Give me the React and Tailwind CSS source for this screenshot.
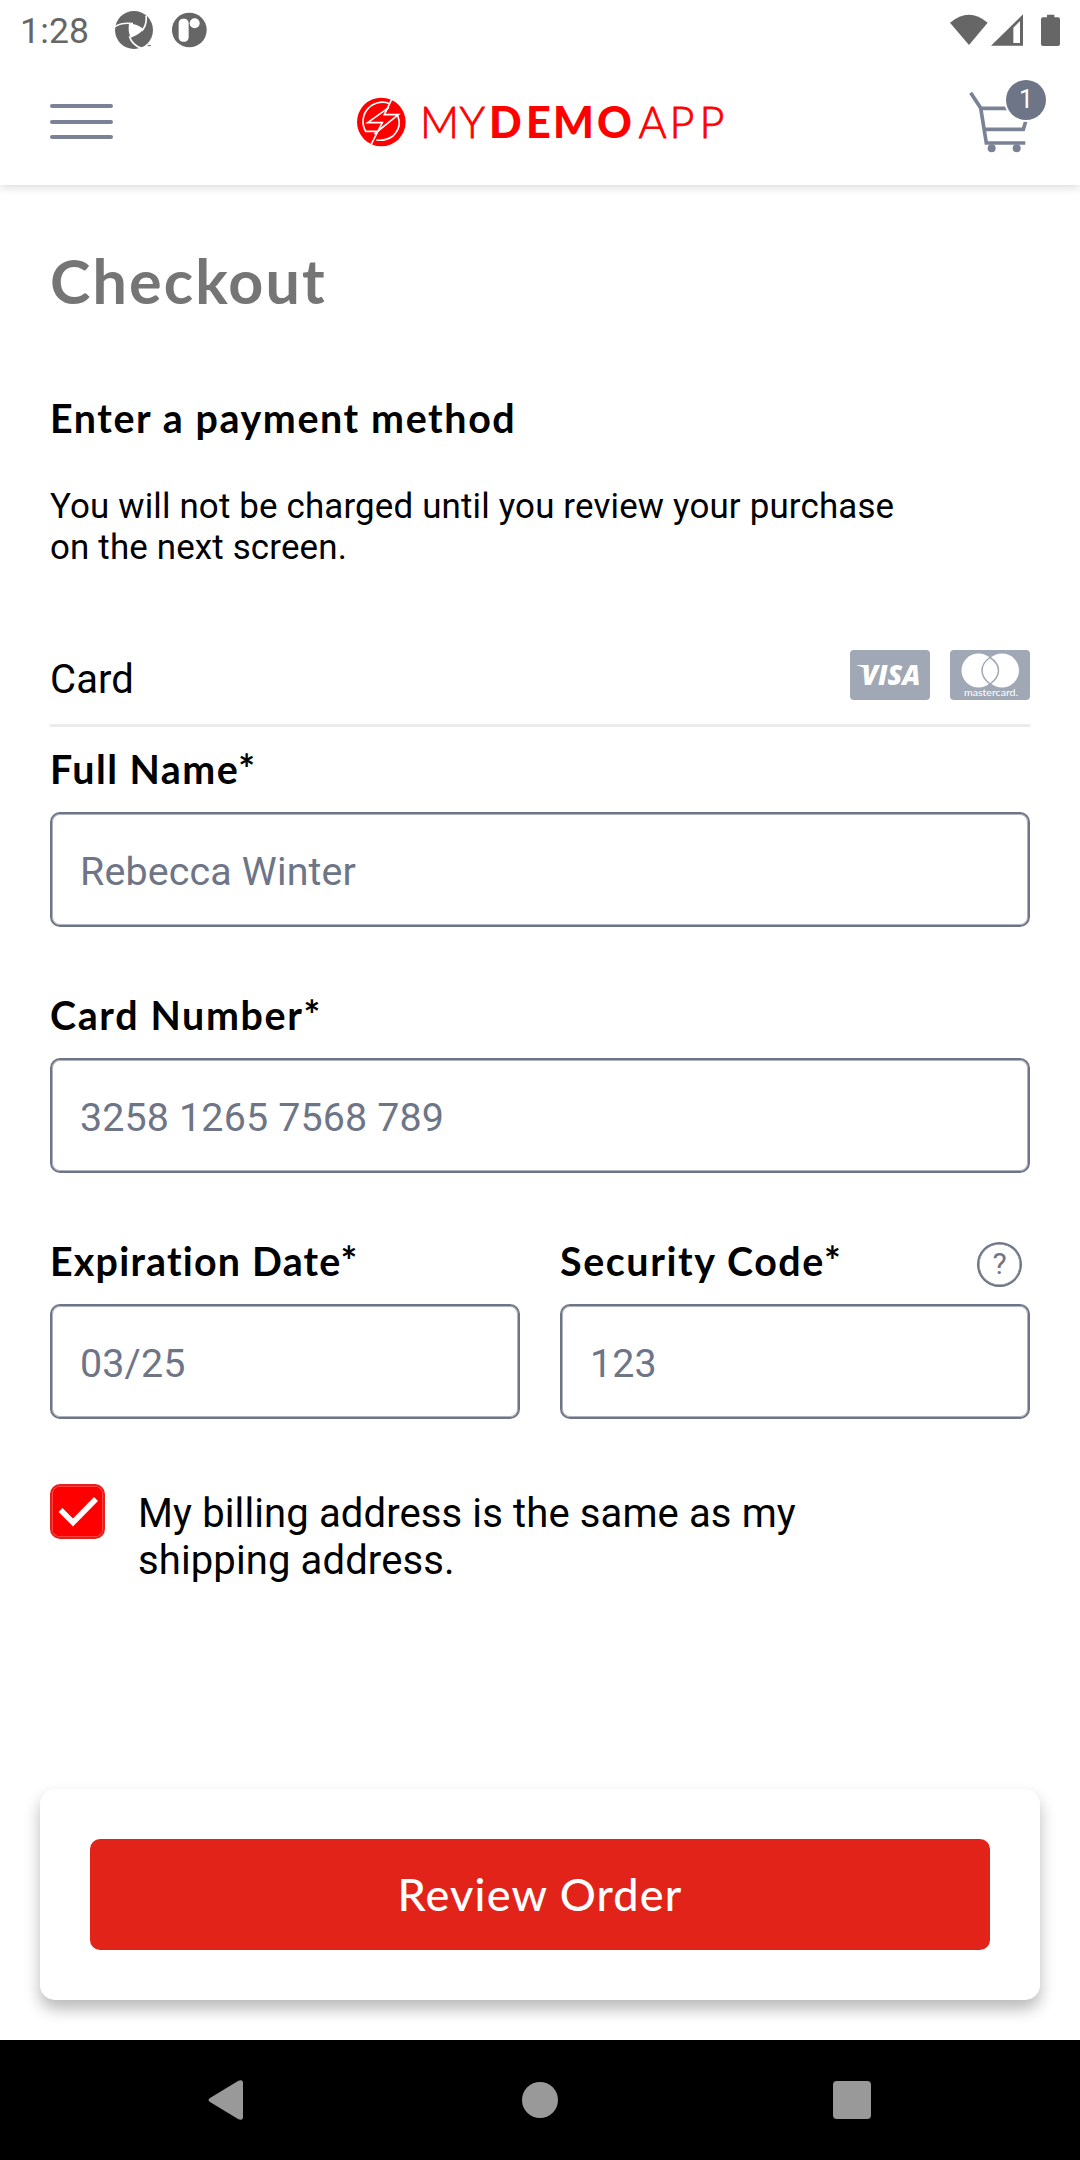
import React from "react";

const ROBOTO = "font-['Roboto','Liberation_Sans',sans-serif]";
const LATO = "font-['Lato','Open_Sans',sans-serif]";

function StatusBar() {
  return (
    <div className={`${ROBOTO} flex h-[63px] shrink-0 items-center justify-between pr-5 pl-[20px] text-[#666]`}>
      <div className="flex items-center">
        <span className="w-[95px] text-[35.500px] leading-[63px] tracking-[0.2px]">1:28</span>
        <svg className="mb-[3px] h-[38px] w-[38px]" viewBox="0 0 114 114">
          <circle cx="57" cy="57" r="57" fill="#666" />
          <path d="M42 38Q66 38 86 54Q72 72 47 80Q38 60 42 38Z" fill="#fff" />
          <path d="M0 47Q22 33 54 38M93 14Q97 40 80 60M43 76Q52 104 82 113" fill="none" stroke="#fff" strokeWidth="5" />
          <path d="M98 104h10" stroke="#666" strokeWidth="3" />
        </svg>
        <svg className="mb-[3px] ml-[18px] h-[36px] w-[36px]" viewBox="0 0 108 108">
          <circle cx="55" cy="54" r="52" fill="#666" />
          <rect x="23" y="20" width="30" height="69" rx="13" fill="#fff" />
          <circle cx="71" cy="34" r="15" fill="#fff" />
        </svg>
      </div>
      <svg className="mb-1 h-[34px] w-[110px]" viewBox="0 0 330 102">
        <path d="M0 29Q57 -19 113 29L57 96Z" fill="#666" />
        <path d="M123 98L219 4V98ZM190 44V90H210V24Z" fill="#666" fillRule="evenodd" />
        <path d="M291 5h22v8h11q6 0 6 6v74q0 6-6 6h-45q-6 0-6-6V19q0-6 6-6h12z" fill="#666" />
      </svg>
    </div>
  );
}

function Logo() {
  return (
    <svg className="h-[60px] w-[380px]" viewBox="0 0 380 60" role="img" aria-label="MyDemoApp">
      <g transform="scale(0.33333)">
        <circle cx="91" cy="90" r="73" fill="#f00" />
        <g fill="none" stroke="#fff" strokeWidth="5">
          <path d="M126 14L100 68H142L70 126" />
          <path d="M114 46L50 92H94L56 166" />
          <path d="M116 35A58 58 0 0 0 44 118H80" />
          <path d="M138 68Q156 102 126 132Q104 148 76 144" />
        </g>
      </g>
      <g fill="#f00" className={LATO} fontSize="43">
        <text fontWeight="300" stroke="#f00" strokeWidth="0.8" x="69 108.500" y="46">MY</text>
        <text fontWeight="900" x="138 175 202 246" y="46">DEMO</text>
        <text fontWeight="300" stroke="#f00" strokeWidth="0.8" x="287.500 318.500 348.500" y="46">APP</text>
      </g>
    </svg>
  );
}

function Header() {
  return (
    <header className="flex h-[122px] shrink-0 items-center justify-between pr-[34px] pb-[5px] pl-[50px] shadow-[0_2px_9px_rgba(0,0,0,0.16)] [clip-path:inset(0_0_-16px_0)]">
      <div className="flex w-[63px] flex-col gap-[11.500px]">
        <span className="h-1 rounded-full bg-[#7a8395]" />
        <span className="h-1 rounded-full bg-[#7a8395]" />
        <span className="h-1 rounded-full bg-[#7a8395]" />
      </div>
      <Logo />
      <div className="relative mb-[3px] h-[80px] w-[78px]">
        <svg className="h-full w-full" viewBox="0 0 234 240">
          <g fill="none" stroke="#7a8395" strokeWidth="11">
            <path d="M8 38L38 84L55 189H172" />
            <path d="M38 85H120M48 148H166L175 118" />
          </g>
          <circle cx="71" cy="205" r="12" fill="#7a8395" />
          <circle cx="146" cy="205" r="12" fill="#7a8395" />
          <circle cx="175" cy="59" r="67" fill="#fff" />
        </svg>
        <span className={`${ROBOTO} absolute top-0 right-0 flex h-10 w-10 items-center justify-center rounded-full bg-[#6e7587] text-[25px] text-white`}>1</span>
      </div>
    </header>
  );
}

function CardBrands() {
  return (
    <div className="flex gap-5">
      <svg className="h-[50px] w-[80px]" viewBox="0 0 80 50">
        <rect width="80" height="50" rx="4" fill="#a0a7b5" />
        <text x="11.500" y="35" textLength="59" lengthAdjust="spacingAndGlyphs" fill="#fff" fontSize="28" fontWeight="800" fontStyle="italic" className="font-['Open_Sans',sans-serif]">VISA</text>
        <path d="M6 15H15Q18 16 18.500 21Q14 17 6 15Z" fill="#fff" />
      </svg>
      <svg className="h-[50px] w-[80px]" viewBox="0 0 80 50">
        <rect width="80" height="50" rx="4" fill="#a0a7b5" />
        <circle cx="28.500" cy="20.500" r="17" fill="#fff" />
        <circle cx="52" cy="20.500" r="17" fill="#fff" />
        <path d="M40 7.500Q48.500 13 48.500 20.500T40 34Q32 28 32 20.500T40 7.500Z" fill="#fff" stroke="#a0a7b5" strokeWidth="1.500" />
        <text x="14" y="45.500" textLength="54" lengthAdjust="spacingAndGlyphs" fill="#fff" fontSize="9.500" className={LATO}>mastercard.</text>
      </svg>
    </div>
  );
}

function Field({ label, placeholder, help, tracking = "tracking-[1.450px]" }) {
  return (
    <label className="flex flex-1 flex-col gap-5">
      <span className={`${LATO} flex h-12 items-center justify-between pt-0.5 text-[39.400px] leading-[48px] font-bold whitespace-nowrap ${tracking}`}>
        {label}
        {help && (
          <span className={`${ROBOTO} mt-[7px] mr-2 flex h-[45px] w-[45px] items-center justify-center rounded-full border-2 border-[#6e7587] pb-0.5 text-[30px] font-normal tracking-normal text-[#6e7587] shadow-[inset_0_0_0_0.500px_#6e7587]`}>?</span>
        )}
      </span>
      <input
        className={`${ROBOTO} h-[115px] w-full rounded-[10px] border-2 border-[#6e7587] px-7 pt-[3px] text-[39.400px] tracking-[0.150px] text-black shadow-[inset_0_0_0_1px_rgba(110,117,135,0.55)] outline-none placeholder:text-[#6e7587] placeholder:opacity-100`}
        placeholder={placeholder}
      />
    </label>
  );
}

export default function App() {
  return (
    <div className="flex h-[2160px] w-[1080px] flex-col overflow-hidden bg-white text-black">
      <StatusBar />
      <Header />
      <main className="flex flex-1 flex-col px-[50px] pt-[60px]">
        <h1 className={`${LATO} text-[61px] leading-[72px] font-bold tracking-[2.100px] text-[#757575]`}>Checkout</h1>
        <h2 className={`${LATO} mt-[77px] text-[39.400px] leading-[48px] font-bold tracking-[1.600px]`}>Enter a payment method</h2>
        <p className={`${ROBOTO} mt-[44px] w-[900px] text-[34.900px] leading-[41px] tracking-[0.160px]`}>
          You will not be charged until you review your purchase
          <br />
          on the next screen.
        </p>
        <div className="mt-[82px] flex h-[77px] items-start justify-between border-b-[3px] border-[#ececec]">
          <span className={`${ROBOTO} mt-[6px] text-[40px] leading-[48px] tracking-[0.100px]`}>Card</span>
          <CardBrands />
        </div>
        <div className="mt-[17px] flex flex-col gap-[63px]">
          <Field label="Full Name*" placeholder="Rebecca Winter" />
          <Field label="Card Number*" placeholder="3258 1265 7568 789" tracking="tracking-[1.650px]" />
          <div className="flex gap-10">
            <Field label="Expiration Date*" placeholder="03/25" tracking="tracking-[1.200px]" />
            <Field label="Security Code*" placeholder="123" tracking="tracking-[1.600px]" help />
          </div>
        </div>
        <div className="mt-[65px] flex">
          <span className="flex h-[55px] w-[55px] items-center justify-center rounded-[10px] border-2 border-[#e2231a] bg-[#f00] shadow-[inset_0_0_0_0.500px_rgba(255,255,255,0.5)]">
            <svg className="h-[50px] w-[50px]" viewBox="0 0 50 50">
              <path d="M7.500 23L20 35.500L43 12" fill="none" stroke="#fff" strokeWidth="5.500" />
            </svg>
          </span>
          <p className={`${ROBOTO} mt-1.5 ml-[33px] text-[40px] leading-[47px] tracking-[0.120px]`}>
            My billing address is the same as my
            <br />
            shipping address.
          </p>
        </div>
      </main>
      <div className="mx-10 mb-10 h-[211px] shrink-0 rounded-[15px] bg-white px-[50px] pt-[50px] shadow-[0_9px_16px_rgba(0,0,0,0.28)]">
        <button className={`${LATO} h-[111px] w-full rounded-[10px] bg-[#e2231a] text-[45px] font-medium tracking-[1.150px] text-white`}>Review Order</button>
      </div>
      <nav className="flex h-[120px] shrink-0 items-center bg-black">
        <svg className="ml-[208px] h-10 w-[35px]" viewBox="0 0 35 40">
          <path d="M2 18L30 1Q35-1 35 3V37Q35 41 30 39L2 22Q-1 20 2 18Z" fill="#999" />
        </svg>
        <span className="ml-[279px] h-9 w-9 rounded-full bg-[#999]" />
        <span className="ml-[275px] h-[38px] w-[38px] rounded bg-[#999]" />
      </nav>
    </div>
  );
}
